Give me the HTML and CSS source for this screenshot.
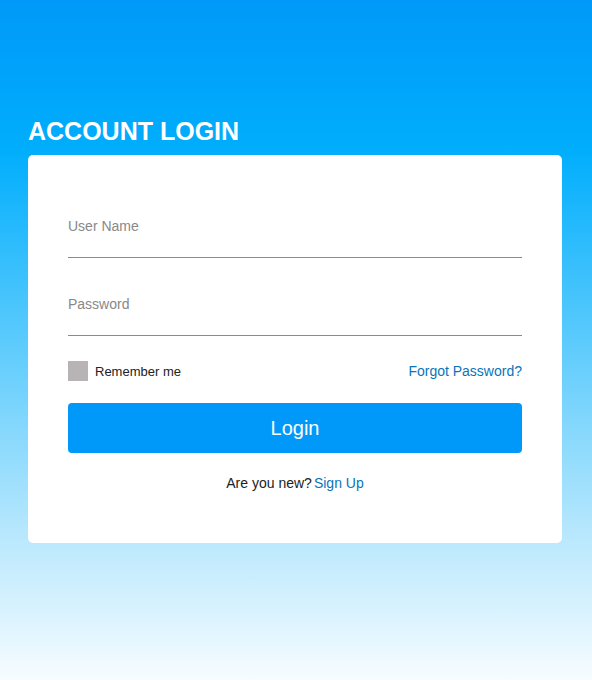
FILE: index.html
```html
<!DOCTYPE html>
<html lang="en">
<head>
<meta charset="UTF-8" />
<meta name="viewport" content="width=device-width, initial-scale=1" />
<title>Account Login</title>
<link rel="stylesheet" href="styles.css">
</head>
<body>

<div class="page">
  <h1 class="title">ACCOUNT LOGIN</h1>

  <!-- Login card -->
  <form class="card" onsubmit="return false;">
    <div class="field">
      <input type="text" id="username" placeholder="User Name" />
    </div>
    <div class="field">
      <input type="password" id="password" placeholder="Password" />
    </div>

    <div class="options">
      <label class="remember">
        <span class="box"></span>
        Remember me
      </label>
      <a href="#" class="link forgot">Forgot Password?</a>
    </div>

    <button type="submit" class="login-btn">Login</button>

    <p class="signup">Are you new?<a href="#" class="link">Sign Up</a></p>
  </form>
</div>

</body>
</html>
```

FILE: styles.css
```css
html, body {
  margin: 0;
  height: 100%;
}

body {
  font-family: "Liberation Sans", Arial, sans-serif;
  background: linear-gradient(to bottom, #0099f9 0%, #00aefc 22%, #b6e7fd 78%, #f7fcff 100%);
  min-height: 680px;
}

.page {
  padding: 117px 30px 0 28px;
}

/* Heading */
.title {
  margin: 0 0 9px;
  color: white;
  font-size: 25px;
  font-weight: bold;
  line-height: 29px;
}

/* Card */
.card {
  background: white;
  border-radius: 5px;
  padding: 40px;
  height: 388px;
  box-sizing: border-box;
  display: flex;
  flex-direction: column;
}

.field {
  margin-top: 17px;
  border-bottom: 1px solid #8a8a8a;
}

.field + .field {
  margin-top: 32px;
}

.field input {
  display: block;
  width: 100%;
  box-sizing: border-box;
  border: none;
  outline: none;
  padding: 4px 0 21px;
  font-family: inherit;
  font-size: 14px;
  line-height: 20px;
  color: #333;
  background: transparent;
}

.field input::placeholder {
  color: #888;
}

/* Remember / forgot row */
.options {
  margin-top: 25px;
  display: flex;
  justify-content: space-between;
  align-items: center;
  height: 20px;
}

.remember {
  display: flex;
  align-items: center;
  gap: 7px;
  font-size: 13px;
  color: #222;
  cursor: pointer;
}

.box {
  width: 20px;
  height: 20px;
  background: #b8b4b6;
}

.link {
  color: #0a74b9;
  text-decoration: none;
  font-size: 14px;
}

/* Button */
.login-btn {
  margin-top: 22px;
  height: 50px;
  border: none;
  border-radius: 4px;
  background: #0099f9;
  color: white;
  font-family: inherit;
  font-size: 20px;
  cursor: pointer;
}

.signup {
  margin: 22px 0 0;
  text-align: center;
  font-size: 14px;
  color: #222;
}

.signup .link {
  margin-left: 2px;
}
```
